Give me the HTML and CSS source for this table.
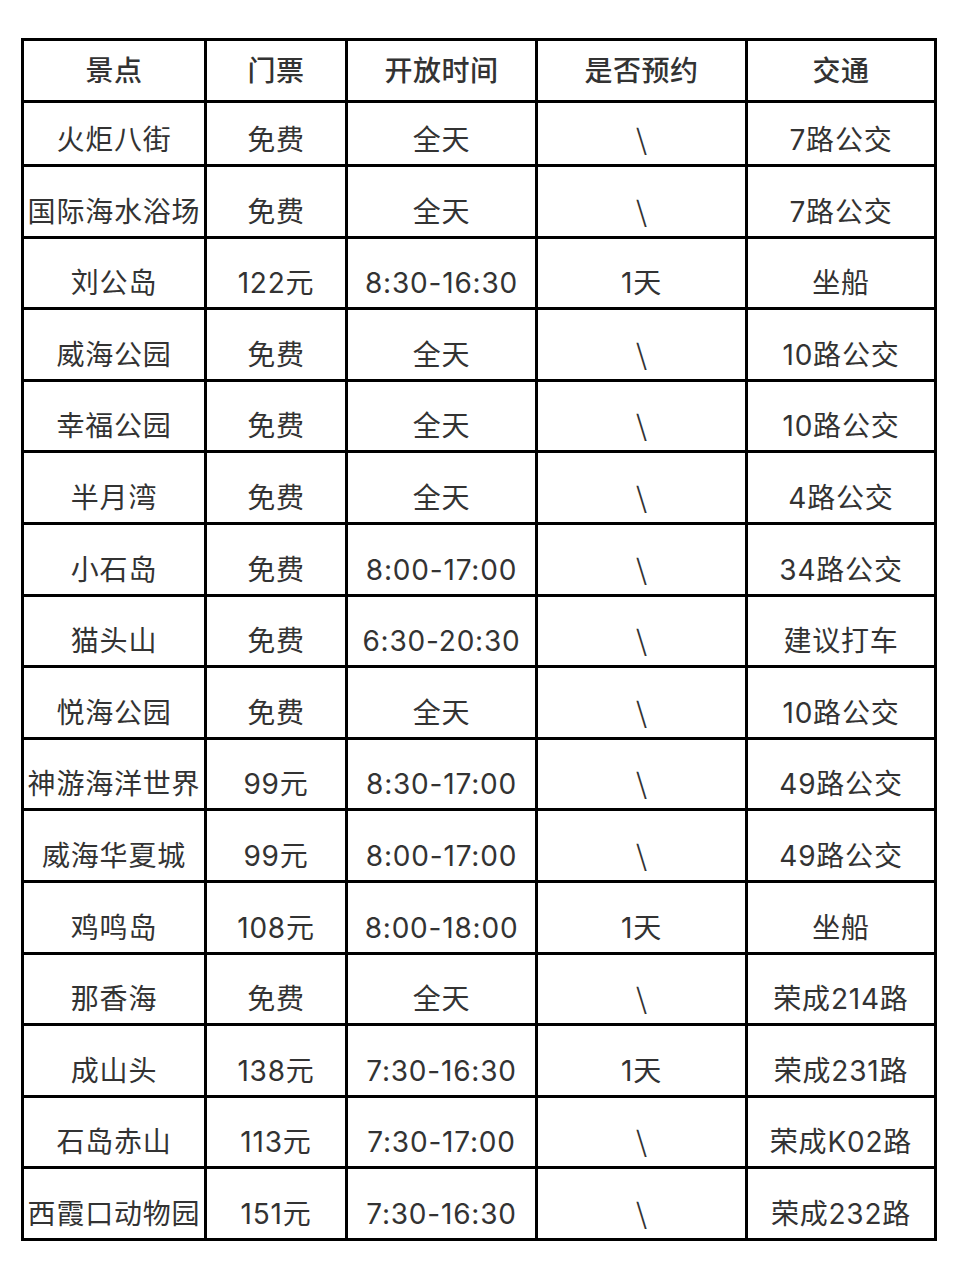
FILE: index.html
```html
<!DOCTYPE html>
<html lang="zh-CN">
<head>
<meta charset="utf-8">
<title>威海景点</title>
<link rel="stylesheet" href="styles.css">
</head>
<body>
<div class="sheet">
  <div class="cell head">景点</div><div class="cell head">门票</div><div class="cell head">开放时间</div><div class="cell head">是否预约</div><div class="cell head">交通</div>
  <div class="cell">火炬八街</div><div class="cell">免费</div><div class="cell">全天</div><div class="cell na">\</div><div class="cell">7路公交</div>
  <div class="cell">国际海水浴场</div><div class="cell">免费</div><div class="cell">全天</div><div class="cell na">\</div><div class="cell">7路公交</div>
  <div class="cell">刘公岛</div><div class="cell">122元</div><div class="cell">8:30-16:30</div><div class="cell">1天</div><div class="cell">坐船</div>
  <div class="cell">威海公园</div><div class="cell">免费</div><div class="cell">全天</div><div class="cell na">\</div><div class="cell">10路公交</div>
  <div class="cell">幸福公园</div><div class="cell">免费</div><div class="cell">全天</div><div class="cell na">\</div><div class="cell">10路公交</div>
  <div class="cell">半月湾</div><div class="cell">免费</div><div class="cell">全天</div><div class="cell na">\</div><div class="cell">4路公交</div>
  <div class="cell">小石岛</div><div class="cell">免费</div><div class="cell">8:00-17:00</div><div class="cell na">\</div><div class="cell">34路公交</div>
  <div class="cell">猫头山</div><div class="cell">免费</div><div class="cell">6:30-20:30</div><div class="cell na">\</div><div class="cell">建议打车</div>
  <div class="cell">悦海公园</div><div class="cell">免费</div><div class="cell">全天</div><div class="cell na">\</div><div class="cell">10路公交</div>
  <div class="cell">神游海洋世界</div><div class="cell">99元</div><div class="cell">8:30-17:00</div><div class="cell na">\</div><div class="cell">49路公交</div>
  <div class="cell">威海华夏城</div><div class="cell">99元</div><div class="cell">8:00-17:00</div><div class="cell na">\</div><div class="cell">49路公交</div>
  <div class="cell">鸡鸣岛</div><div class="cell">108元</div><div class="cell">8:00-18:00</div><div class="cell">1天</div><div class="cell">坐船</div>
  <div class="cell">那香海</div><div class="cell">免费</div><div class="cell">全天</div><div class="cell na">\</div><div class="cell">荣成214路</div>
  <div class="cell">成山头</div><div class="cell">138元</div><div class="cell">7:30-16:30</div><div class="cell">1天</div><div class="cell">荣成231路</div>
  <div class="cell">石岛赤山</div><div class="cell">113元</div><div class="cell">7:30-17:00</div><div class="cell na">\</div><div class="cell">荣成K02路</div>
  <div class="cell">西霞口动物园</div><div class="cell">151元</div><div class="cell">7:30-16:30</div><div class="cell na">\</div><div class="cell">荣成232路</div>
</div>
</body>
</html>
```

FILE: styles.css
```css
html, body {
  margin: 0;
  padding: 0;
  background: #ffffff;
}

body {
  font-family: Inter, "Noto Sans CJK SC", sans-serif;
  color: #333333;
}

.sheet {
  box-sizing: border-box;
  width: 916px;
  margin: 38px 0 0 21px;
  display: grid;
  grid-template-columns: 183px 141px 190px 210px 189px;
  grid-template-rows: 62px 64px repeat(15, 71.6px);
  border-top: 3px solid #000;
  border-left: 3px solid #000;
}

.cell {
  box-sizing: border-box;
  border-right: 3px solid #000;
  border-bottom: 3px solid #000;
  display: flex;
  align-items: flex-end;
  justify-content: center;
  padding-bottom: 10px;
  font-size: 28px;
  line-height: 28px;
  letter-spacing: 0.8px;
  white-space: nowrap;
}

.head {
  align-items: center;
  padding-top: 1px;
  padding-bottom: 0;
  font-weight: 500;
  letter-spacing: 0.5px;
}

.na {
  font-family: "Noto Sans CJK SC", sans-serif;
  letter-spacing: 0;
  padding-bottom: 12px;
}
```
